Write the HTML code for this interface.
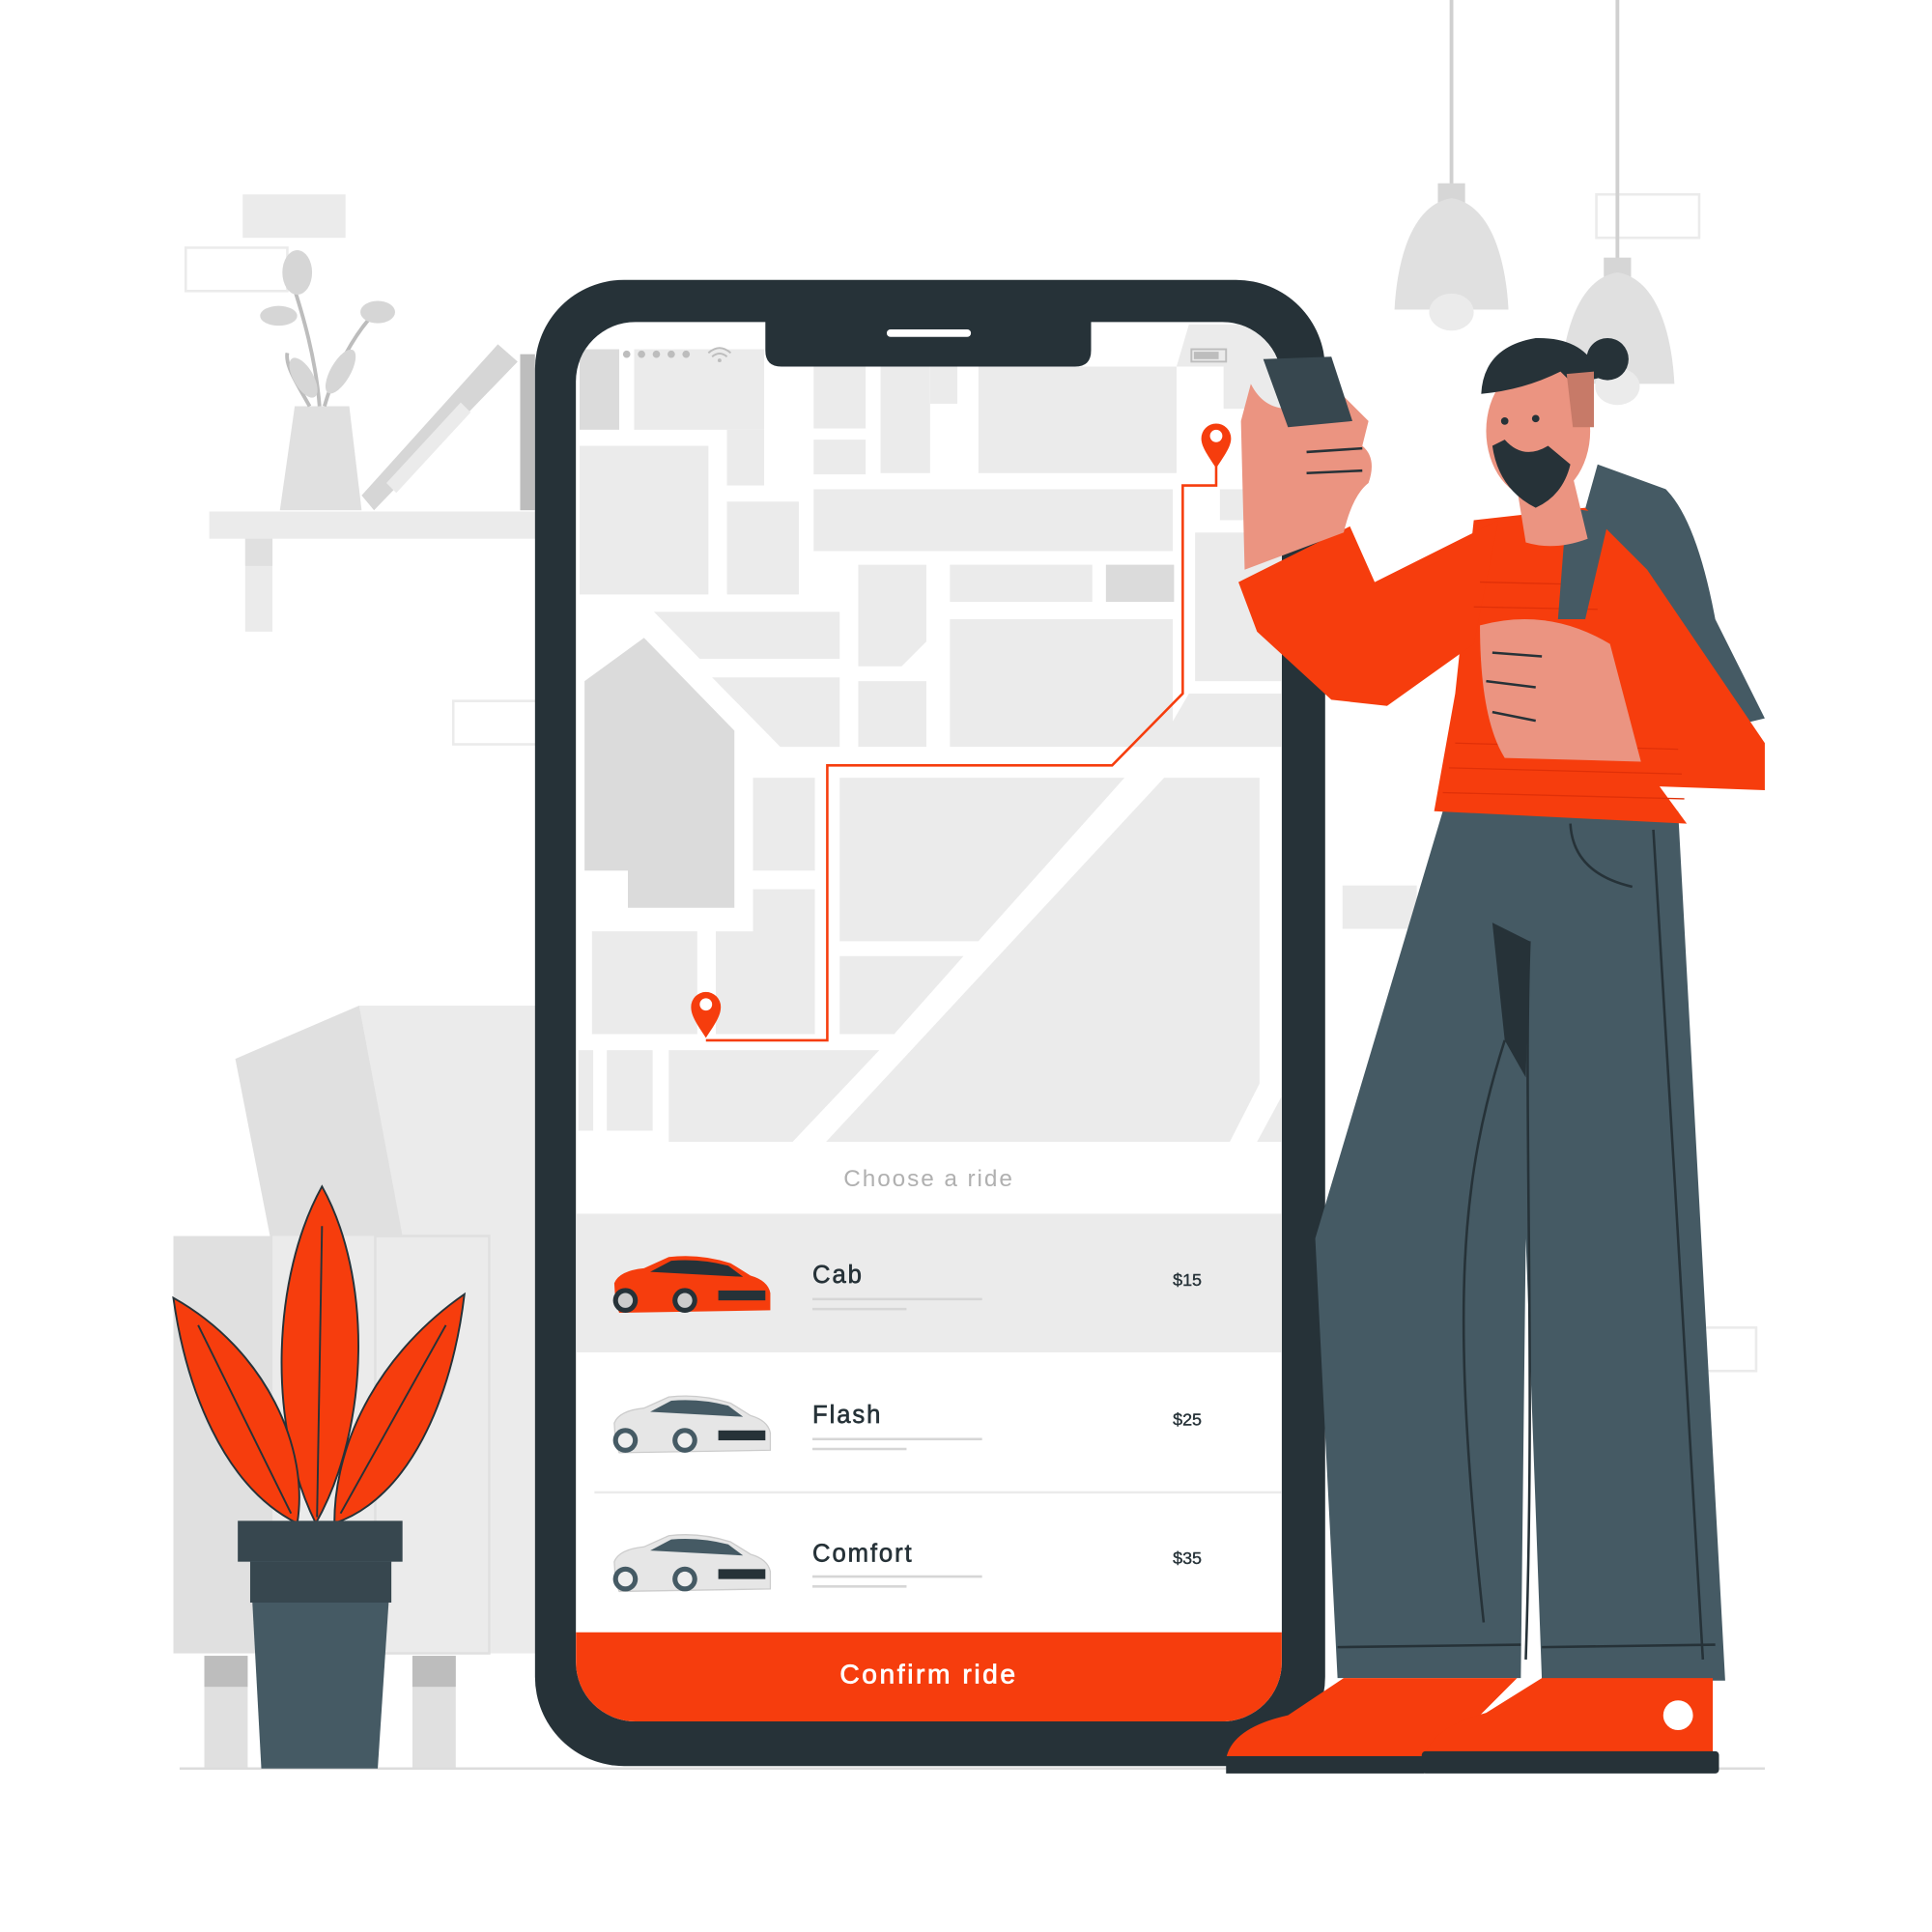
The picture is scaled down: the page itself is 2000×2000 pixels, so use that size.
<!DOCTYPE html>
<html><head><meta charset="utf-8"><style>html,body{margin:0;padding:0;background:#fff}svg{display:block}</style></head>
<body>
<svg width="2000" height="2000" viewBox="0 0 1560 1560" xmlns="http://www.w3.org/2000/svg" font-family="Liberation Sans, sans-serif">
<defs><clipPath id="scr"><rect x="465" y="260" width="570" height="1130" rx="48"/></clipPath></defs>
<rect x="196" y="157" width="83" height="35" fill="#ebebeb"/>
<rect x="150" y="200" width="82" height="35" fill="none" stroke="#ebebeb" stroke-width="2"/>
<rect x="1289" y="157" width="83" height="35" fill="none" stroke="#ebebeb" stroke-width="2"/>
<rect x="366" y="566" width="70" height="35" fill="none" stroke="#ebebeb" stroke-width="2"/>
<rect x="1084" y="715" width="60" height="35" fill="#ebebeb"/>
<rect x="1360" y="1072" width="58" height="35" fill="none" stroke="#ebebeb" stroke-width="2"/>
<rect x="169" y="413" width="265" height="22" fill="#ebebeb"/>
<rect x="198" y="435" width="22" height="75" fill="#ebebeb"/>
<rect x="198" y="435" width="22" height="22" fill="#e0e0e0"/>
<polygon points="238,328 282,328 292,412 226,412" fill="#e0e0e0"/>
<polygon points="292,400 402,278 418,292 302,412" fill="#d6d6d6"/>
<polygon points="312,390 372,325 380,333 320,398" fill="#ebebeb"/>
<rect x="420" y="286" width="12" height="126" fill="#bdbdbd"/>
<g fill="none" stroke="#bdbdbd" stroke-width="3"><path d="M258,328 C255,290 245,255 235,225"/><path d="M262,328 C270,300 285,270 305,250"/><path d="M250,328 C240,310 230,295 232,285"/></g>
<g fill="#d6d6d6"><ellipse cx="240" cy="220" rx="12" ry="18"/><ellipse cx="225" cy="255" rx="15" ry="8"/><ellipse cx="305" cy="252" rx="14" ry="9"/><ellipse cx="275" cy="300" rx="8" ry="20" transform="rotate(30 275 300)"/><ellipse cx="245" cy="305" rx="8" ry="18" transform="rotate(-30 245 305)"/></g>
<polygon points="290,812 435,812 435,1000 325,1000" fill="#ebebeb"/>
<polygon points="190,855 290,812 325,998 218,998" fill="#e0e0e0"/>
<rect x="140" y="998" width="295" height="337" fill="#ebebeb"/>
<rect x="140" y="998" width="80" height="337" fill="#e0e0e0"/>
<rect x="303" y="998" width="92" height="337" fill="#ebebeb" stroke="#e0e0e0" stroke-width="2"/>
<rect x="165" y="1337" width="35" height="90" fill="#e0e0e0"/><rect x="165" y="1337" width="35" height="25" fill="#bdbdbd"/>
<rect x="333" y="1337" width="35" height="90" fill="#e0e0e0"/><rect x="333" y="1337" width="35" height="25" fill="#bdbdbd"/>
<line x1="145" y1="1428" x2="1425" y2="1428" stroke="#dcdcdc" stroke-width="2"/>
<g fill="#f63d0d" stroke="#263238" stroke-width="1.5">
<path d="M260,958 C300,1030 300,1150 255,1230 C215,1150 220,1030 260,958Z"/>
<path d="M140,1048 C215,1090 250,1170 240,1230 C180,1200 150,1120 140,1048Z"/>
<path d="M375,1045 C365,1130 330,1210 270,1230 C270,1160 310,1090 375,1045Z"/>
</g>
<g stroke="#263238" stroke-width="1.5" fill="none"><path d="M260,990 L256,1225"/><path d="M160,1070 L235,1222"/><path d="M360,1070 L275,1222"/></g>
<rect x="192" y="1228" width="133" height="33" fill="#37474f"/>
<polygon points="202,1261 316,1261 305,1428 211,1428" fill="#455a64"/>
<rect x="202" y="1261" width="114" height="33" fill="#37474f"/>
<line x1="1172" y1="0" x2="1172" y2="150" stroke="#d0d0d0" stroke-width="3"/>
<rect x="1161" y="148" width="22" height="18" fill="#d6d6d6"/>
<path d="M1172,160 C1140,165 1128,210 1126,250 L1218,250 C1216,210 1204,165 1172,160Z" fill="#e0e0e0"/>
<ellipse cx="1172" cy="252" rx="18" ry="15" fill="#ebebeb"/>
<line x1="1306" y1="0" x2="1306" y2="210" stroke="#d0d0d0" stroke-width="3"/>
<rect x="1295" y="208" width="22" height="18" fill="#d6d6d6"/>
<path d="M1306,220 C1274,225 1262,270 1260,310 L1352,310 C1350,270 1338,225 1306,220Z" fill="#e0e0e0"/>
<ellipse cx="1306" cy="312" rx="18" ry="15" fill="#ebebeb"/>
<rect x="432" y="226" width="638" height="1200" rx="72" fill="#263238"/>
<rect x="465" y="260" width="570" height="1130" rx="48" fill="#fff"/>
<g clip-path="url(#scr)">
<g fill="#ebebeb">
<rect x="512" y="282" width="105" height="65"/>
<rect x="468" y="360" width="104" height="120"/>
<rect x="587" y="347" width="30" height="45"/>
<rect x="587" y="405" width="58" height="75"/>
<rect x="657" y="296" width="42" height="50"/><rect x="657" y="355" width="42" height="28"/>
<rect x="711" y="296" width="40" height="86"/><rect x="751" y="296" width="22" height="30"/>
<rect x="790" y="296" width="160" height="86"/>
<rect x="657" y="395" width="290" height="50"/>
<polygon points="693,456 748,456 748,518 728,538 693,538"/>
<rect x="767" y="456" width="115" height="30"/>
<rect x="767" y="500" width="180" height="103"/>
<polygon points="528,494 678,494 678,532 565,532"/>
<polygon points="575,547 678,547 678,603 630,603"/>
<rect x="693" y="550" width="55" height="53"/>
<rect x="608" y="628" width="50" height="75"/>
<polygon points="608,718 658,718 658,835 578,835 578,752 608,752"/>
<rect x="478" y="752" width="85" height="83"/>
<polygon points="678,628 908,628 790,760 678,760"/>
<polygon points="940,628 1017,628 1017,875 993,922 667,922"/>
<polygon points="678,772 778,772 722,835 678,835"/>
<polygon points="540,848 710,848 640,922 540,922"/>
<rect x="467" y="848" width="12" height="65"/><rect x="490" y="848" width="37" height="65"/>
<polygon points="1015,922 1035,885 1035,922"/>
<polygon points="960,560 1035,560 1035,603 935,603"/>
<rect x="985" y="395" width="50" height="25"/><rect x="965" y="430" width="70" height="120"/>
<polygon points="960,262 1035,262 1035,330 988,330 988,296 950,296"/>
</g>
<g fill="#dbdbdb">
<rect x="468" y="282" width="32" height="65"/>
<rect x="893" y="456" width="55" height="30"/>
<polygon points="472,550 520,515 593,590 593,733 507,733 507,703 472,703"/>
</g>
<polyline points="570,840 668,840 668,618 898,618 955,560 955,392 982,392 982,375" fill="none" stroke="#f63d0d" stroke-width="2"/>
<path d="M570,838 C562,826 558,820 558,813 A12,12 0 0 1 582,813 C582,820 578,826 570,838Z" fill="#f63d0d"/><circle cx="570" cy="811" r="5" fill="#fff"/>
<path d="M982,378 C974,366 970,360 970,354 A12,12 0 0 1 994,354 C994,360 990,366 982,378Z" fill="#f63d0d"/><circle cx="982" cy="352" r="5" fill="#fff"/>
<text x="750" y="958" text-anchor="middle" font-size="19" fill="#b0b0b0" letter-spacing="1.5">Choose a ride</text>
<rect x="465" y="980" width="570" height="112" fill="#ebebeb"/>
<line x1="480" y1="1205" x2="1035" y2="1205" stroke="#ebebeb" stroke-width="2"/>
<rect x="465" y="1318" width="570" height="80" fill="#f63d0d"/>
<text x="750" y="1359" text-anchor="middle" font-size="22" fill="#fff" stroke="#fff" stroke-width="0.6" letter-spacing="2">Confirm ride</text>
</g>
<path d="M618,258 L881,258 L881,283 Q881,296 868,296 L631,296 Q618,296 618,283Z" fill="#263238"/>
<rect x="716" y="266" width="68" height="6" rx="3" fill="#fff"/>
<g fill="#bdbdbd"><circle cx="506" cy="286" r="3"/><circle cx="518" cy="286" r="3"/><circle cx="530" cy="286" r="3"/><circle cx="542" cy="286" r="3"/><circle cx="554" cy="286" r="3"/></g>
<path d="M572,285 Q581,277 590,285 M575,288 Q581,283 587,288" fill="none" stroke="#bdbdbd" stroke-width="1.5"/><circle cx="581" cy="291" r="1.5" fill="#bdbdbd"/>
<rect x="962" y="282" width="28" height="10" fill="none" stroke="#bdbdbd" stroke-width="1.5"/><rect x="964" y="284" width="20" height="6" fill="#bdbdbd"/>
<path d="M497,1052 L496,1036 Q500,1026 520,1024 L540,1015 Q565,1012 590,1020 L606,1030 Q620,1034 622,1044 L622,1058 L500,1060Z" fill="#f63d0d"/>
<path d="M525,1027 L542,1018 Q565,1016 588,1022 L600,1031Z" fill="#263238"/>
<rect x="580" y="1042" width="38" height="8" fill="#263238"/><circle cx="505" cy="1050" r="10" fill="#263238"/><circle cx="505" cy="1050" r="6" fill="#ccc"/><circle cx="553" cy="1050" r="10" fill="#263238"/><circle cx="553" cy="1050" r="6" fill="#ccc"/>
<g transform="translate(0,113)"><path d="M497,1052 L496,1036 Q500,1026 520,1024 L540,1015 Q565,1012 590,1020 L606,1030 Q620,1034 622,1044 L622,1058 L500,1060Z" fill="#e6e6e6" stroke="#ccc"/><path d="M525,1027 L542,1018 Q565,1016 588,1022 L600,1031Z" fill="#455a64"/><rect x="580" y="1042" width="38" height="8" fill="#263238"/><circle cx="505" cy="1050" r="10" fill="#455a64"/><circle cx="505" cy="1050" r="6" fill="#eee"/><circle cx="553" cy="1050" r="10" fill="#455a64"/><circle cx="553" cy="1050" r="6" fill="#eee"/></g>
<g transform="translate(0,225)"><path d="M497,1052 L496,1036 Q500,1026 520,1024 L540,1015 Q565,1012 590,1020 L606,1030 Q620,1034 622,1044 L622,1058 L500,1060Z" fill="#e6e6e6" stroke="#ccc"/><path d="M525,1027 L542,1018 Q565,1016 588,1022 L600,1031Z" fill="#455a64"/><rect x="580" y="1042" width="38" height="8" fill="#263238"/><circle cx="505" cy="1050" r="10" fill="#455a64"/><circle cx="505" cy="1050" r="6" fill="#eee"/><circle cx="553" cy="1050" r="10" fill="#455a64"/><circle cx="553" cy="1050" r="6" fill="#eee"/></g>
<g font-size="20" fill="#263238" stroke="#263238" stroke-width="0.5" letter-spacing="1.5">
<text x="656" y="1036">Cab</text><text x="656" y="1149">Flash</text><text x="656" y="1261">Comfort</text></g>
<g font-size="14" fill="#263238" stroke="#263238" stroke-width="0.3"><text x="947" y="1038">$15</text><text x="947" y="1151">$25</text><text x="947" y="1263">$35</text></g>
<g stroke="#d6d6d6" stroke-width="2"><line x1="656" y1="1049" x2="793" y2="1049"/><line x1="656" y1="1057" x2="732" y2="1057"/><line x1="656" y1="1162" x2="793" y2="1162"/><line x1="656" y1="1170" x2="732" y2="1170"/><line x1="656" y1="1273" x2="793" y2="1273"/><line x1="656" y1="1281" x2="732" y2="1281"/></g>
<!-- man -->
<path d="M1290,375 L1345,395 Q1370,420 1385,500 L1425,580 L1300,610 L1255,500Z" fill="#455a64"/>
<path d="M1165,655 L1355,655 L1393,1357 L1245,1357 L1232,1000 L1228,1355 L1080,1355 L1062,1000 Z" fill="#455a64"/>
<path d="M1205,745 L1235,760 L1232,870 L1215,840Z" fill="#263238"/>
<g fill="none" stroke="#263238" stroke-width="2"><path d="M1215,840 C1180,950 1170,1050 1198,1310"/><path d="M1235,760 C1230,900 1240,1100 1232,1340"/><path d="M1335,670 C1350,900 1360,1100 1375,1340"/><path d="M1080,1330 L1228,1328 M1245,1330 L1385,1328"/><path d="M1268,665 Q1270,705 1318,716"/></g>
<path d="M1085,1355 L1225,1355 L1180,1400 L1145,1420 L990,1420 Q995,1395 1040,1385Z" fill="#f63d0d"/>
<path d="M1245,1355 L1383,1355 L1383,1415 L1150,1420 Q1155,1395 1200,1383Z" fill="#f63d0d"/>
<rect x="990" y="1418" width="160" height="14" fill="#263238"/><rect x="1148" y="1414" width="240" height="18" rx="3" fill="#263238"/>
<circle cx="1355" cy="1385" r="12" fill="#fff"/>
<path d="M1190,420 L1280,410 L1330,460 L1425,600 L1425,638 L1340,635 L1362,665 L1158,655 L1175,560 Z" fill="#f63d0d"/>
<path d="M1000,470 L1090,425 L1110,470 L1210,420 L1190,520 L1120,570 L1075,565 L1015,510 Z" fill="#f63d0d"/>
<g stroke="#e03008" stroke-width="1"><path d="M1195,470 L1280,472 M1190,490 L1290,492 M1175,600 L1355,605 M1170,620 L1358,625 M1165,640 L1360,645"/></g>
<path d="M1265,410 L1300,415 L1280,500 L1258,500Z" fill="#455a64"/>
<path d="M1195,505 Q1250,490 1300,520 L1325,615 L1215,612 Q1195,580 1195,505Z" fill="#eb9481"/>
<g stroke="#263238" stroke-width="2" fill="none"><path d="M1205,527 L1245,530 M1200,550 L1240,555 M1205,575 L1240,582"/></g>
<path d="M1005,460 L1085,430 Q1092,400 1105,390 Q1112,370 1100,360 L1105,340 L1085,320 L1040,330 Q1020,330 1010,310 L1002,340 Z" fill="#eb9481"/>
<path d="M1020,290 L1075,288 L1092,340 L1040,345Z" fill="#37474f"/>
<g stroke="#263238" stroke-width="2" fill="none"><path d="M1055,365 L1100,362 M1055,382 L1100,380"/></g>
<path d="M1225,395 L1270,385 L1282,435 Q1255,445 1232,438Z" fill="#eb9481"/>
<ellipse cx="1242" cy="348" rx="42" ry="55" fill="#eb9481"/>
<path d="M1205,360 Q1210,395 1240,410 Q1262,400 1268,375 L1250,360 Q1230,372 1215,355Z" fill="#263238"/>
<path d="M1196,318 Q1198,280 1240,273 Q1282,272 1292,305 L1270,310 L1260,300 Q1230,315 1196,318Z" fill="#263238"/>
<circle cx="1298" cy="290" r="17" fill="#263238"/>
<path d="M1265,302 L1287,300 L1287,345 L1270,345Z" fill="#c77a68"/>
<circle cx="1240" cy="338" r="3" fill="#263238"/><circle cx="1215" cy="340" r="3" fill="#263238"/>
</svg>
</body></html>
